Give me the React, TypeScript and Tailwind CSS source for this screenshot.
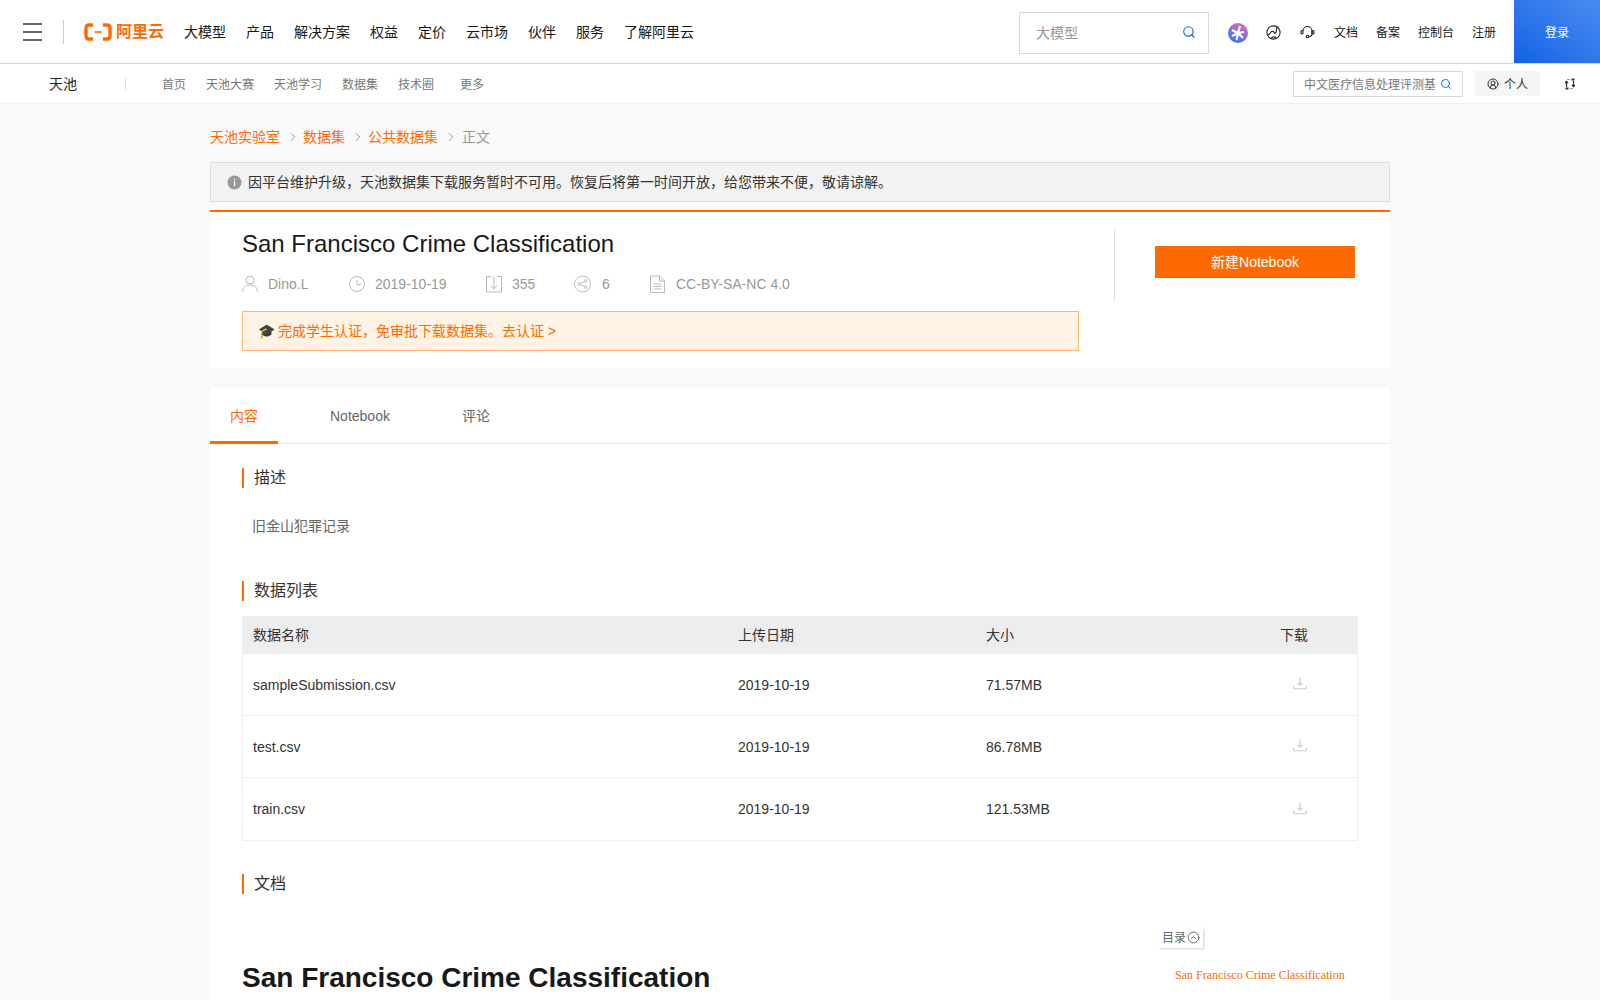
import { Search, ChevronRight, CircleChevronUp, CircleUserRound } from "lucide-react";
import type { ReactNode } from "react";

const FONT = "font-['Liberation_Sans','Noto_Sans_CJK_SC',sans-serif]";

const navItems = ["大模型", "产品", "解决方案", "权益", "定价", "云市场", "伙伴", "服务", "了解阿里云"];

const files = [
  { name: "sampleSubmission.csv", date: "2019-10-19", size: "71.57MB" },
  { name: "test.csv", date: "2019-10-19", size: "86.78MB" },
  { name: "train.csv", date: "2019-10-19", size: "121.53MB" },
];

function Logo() {
  return (
    <div className="ml-5 flex items-center gap-1 text-[#ff6a00]">
      <svg width="28" height="18" viewBox="0 0 28 18" fill="none">
        <path d="M9 2H5C3 2 2 3 2 5v8c0 2 1 3 3 3h4" stroke="#ff6a00" strokeWidth="3.4" />
        <path d="M19 2h4c2 0 3 1 3 3v8c0 2-1 3-3 3h-4" stroke="#ff6a00" strokeWidth="3.4" />
        <path d="M10.5 9h7" stroke="#ff6a00" strokeWidth="1.6" />
      </svg>
      <span className="text-base font-bold leading-none">阿里云</span>
    </div>
  );
}

function SectionTitle({ children }: { children: string }) {
  return <h3 className="border-l-2 border-[#ff6a00] pl-2.5 text-base leading-5 text-[#333]">{children}</h3>;
}

function Meta({ icon, text, className }: { icon: ReactNode; text: string; className: string }) {
  return (
    <div className={`flex items-center ${className}`}>
      <svg width="18" height="18" viewBox="0 0 18 18" fill="none" stroke="#bbb" strokeWidth="1" className="shrink-0">
        {icon}
      </svg>
      <span>{text}</span>
    </div>
  );
}

export default function App() {
  return (
    <div className={`${FONT} h-[1000px] overflow-hidden bg-[#f9f9f9] text-[#333]`}>
      {/* 顶部导航 */}
      <header className="flex h-16 items-stretch border-b border-[#d9d9d9] bg-white">
        <div className="flex items-center pl-[23px]">
          <div className="flex w-[19px] flex-col gap-[6px]">
            <span className="h-0.5 bg-[#666]" />
            <span className="h-0.5 bg-[#666]" />
            <span className="h-0.5 bg-[#666]" />
          </div>
          <span className="ml-[21px] h-6 w-px bg-[#ccc]" />
          <Logo />
        </div>
        <nav className="ml-5 flex items-center gap-5 pt-px text-sm text-[#181818]">
          {navItems.map((n) => (
            <span key={n}>{n}</span>
          ))}
        </nav>
        <div className="ml-auto flex items-center">
          <div className="mt-[3px] flex h-[42px] w-[190px] items-center justify-between border border-[#d9d9d9] pl-4 pr-3 text-sm text-[#999]">
            <span>大模型</span>
            <Search size={14} className="mb-[3px] text-[#1a66e8]" />
          </div>
          <svg width="20" height="20" viewBox="0 0 20 20" className="ml-[19px] mt-0.5">
            <defs>
              <linearGradient id="g" x1="0.8" y1="0" x2="0.3" y2="1">
                <stop offset="0" stopColor="#e56fa8" />
                <stop offset="0.5" stopColor="#8a6fe0" />
                <stop offset="1" stopColor="#2f7bf0" />
              </linearGradient>
            </defs>
            <circle cx="10" cy="10" r="10" fill="url(#g)" />
            <path d="M12 3l-2 7-1.5 7M4 7l6 3 6-1M10 10l5 5M10 10l-6 3" stroke="#fff" strokeWidth="2.2" fill="none" />
          </svg>
          <svg width="15" height="15" viewBox="0 0 15 15" fill="none" stroke="#222" strokeWidth="1.1" className="ml-[18px] mt-0.5">
            <circle cx="7.5" cy="7.5" r="6.6" />
            <path d="M1.5 10c2 0 2.5-1.5 3.5-3s3-.5 3.5 1 2-1 2-3 1-3 2-3" />
            <path d="M5 13.5c1-1.5 3-2 5-1" />
          </svg>
          <svg width="15" height="15" viewBox="0 0 15 15" fill="none" stroke="#222" strokeWidth="1.1" className="ml-[19px] mt-0.5">
            <path d="M3 6a4.5 4.5 0 0 1 9 0v3c0 1.5-1.5 2.5-3.2 2.5" />
            <rect x="1" y="5.5" width="2" height="3.5" rx="1" />
            <rect x="12" y="5.5" width="2" height="3.5" rx="1" />
            <circle cx="7.5" cy="11.5" r="1.3" />
          </svg>
          <div className="ml-[19px] mt-0.5 flex items-center gap-[18px] text-xs text-[#181818]">
            <span>文档</span>
            <span>备案</span>
            <span>控制台</span>
            <span className="mr-[18px]">注册</span>
          </div>
          <div className="flex h-full w-[86px] items-center justify-center bg-gradient-to-tr from-[#0f62e6] to-[#4a8bf0] pt-0.5 text-xs text-white">
            登录
          </div>
        </div>
      </header>

      {/* 天池导航 */}
      <div className="flex h-10 items-center border-b border-[#eee] bg-white pl-[49px]">
        <span className="w-[76px] pt-px text-sm text-[#222]">天池</span>
        <span className="h-3 w-px bg-[#ddd]" />
        <nav className="ml-9 flex items-center pt-0.5 text-xs text-[#777]">
          <span className="mr-5">首页</span>
          <span className="mr-5">天池大赛</span>
          <span className="mr-5">天池学习</span>
          <span className="mr-5">数据集</span>
          <span className="mr-[26px]">技术圈</span>
          <span>更多</span>
        </nav>
        <div className="ml-auto flex items-center">
          <div className="flex h-[26px] w-[170px] items-center justify-between border border-[#d9d9d9] pl-2.5 pr-2.5 pt-0.5 text-xs text-[#777]">
            <span className="w-[131px] overflow-hidden whitespace-nowrap">中文医疗信息处理评测基</span>
            <Search size={12} className="mb-0.5 shrink-0 text-[#1a66e8]" />
          </div>
          <div className="ml-3 flex h-[25px] w-[65px] items-center justify-center gap-[5px] bg-[#f5f5f5] pt-0.5 text-xs text-[#333]">
            <CircleUserRound size={12} className="mb-0.5" />
            <span>个人</span>
          </div>
          <svg width="10" height="12" viewBox="0 0 10 12" fill="none" stroke="#333" strokeWidth="1.3" className="ml-[25px] mr-[25px]">
            <path d="M1.5 9V3.500M0 5l1.500-1.500L3 5M8.500 3v5.500M7 7l1.500 1.500L10 7" />
            <path d="M2 1.500h3M5 10.500h3" stroke="#999" strokeWidth="1" />
            <rect x="6.500" y="0.500" width="3" height="2" fill="#333" stroke="none" />
            <rect x="0.500" y="9.500" width="3" height="2" fill="#333" stroke="none" />
          </svg>
        </div>
      </div>

      <main className="mx-auto w-[1180px]">
        {/* 面包屑 */}
        <div className="flex h-[58px] items-center pt-2 text-sm text-[#ff6a00]">
          <span>天池实验室</span>
          <ChevronRight size={14} strokeWidth={1.4} className="ml-1.5 mr-[3px] text-[#888]" />
          <span>数据集</span>
          <ChevronRight size={14} strokeWidth={1.4} className="ml-1.5 mr-[3px] text-[#888]" />
          <span>公共数据集</span>
          <ChevronRight size={14} strokeWidth={1.4} className="ml-1.5 mr-1 text-[#888]" />
          <span className="text-[#999]">正文</span>
        </div>

        <div className="flex h-10 items-center gap-1.5 border border-[#ddd] bg-[#f2f2f2] pl-4 text-sm text-[#333]">
          <svg width="15" height="15" viewBox="0 0 15 15" className="shrink-0">
            <circle cx="7.5" cy="7.5" r="7" fill="#999" />
            <path d="M7.5 6.500v4.500M7.500 3.800v1.400" stroke="#fff" strokeWidth="1.3" />
          </svg>
          <span>因平台维护升级，天池数据集下载服务暂时不可用。恢复后将第一时间开放，给您带来不便，敬请谅解。</span>
        </div>

        {/* 标题卡片 */}
        <section className="mt-2 flex h-[158px] border-t-2 border-[#ff6a00] bg-white pl-8">
          <div className="w-[837px] pt-[17px]">
            <h1 className="text-2xl leading-[30px] text-[#181818]">San Francisco Crime Classification</h1>
            <div className="mt-[13px] flex h-6 items-center text-sm text-[#999]">
              <Meta
                className="w-[107px] gap-2"
                text="Dino.L"
                icon={
                  <>
                    <circle cx="8" cy="5" r="4" />
                    <path d="M.5 17c0-4.500 3-7 7.500-7s7.500 2.500 7.500 7" />
                  </>
                }
              />
              <Meta
                className="w-[137px] gap-2"
                text="2019-10-19"
                icon={
                  <>
                    <circle cx="8" cy="9" r="7.5" />
                    <path d="M8 5v4.500h4" />
                  </>
                }
              />
              <Meta
                className="w-[88px] gap-2"
                text="355"
                icon={
                  <>
                    <path d="M5 1.500H.5v15.500h15V1.500H11" />
                    <path d="M8 1.500v12M5 10.500l3 3.500 3-3.500" />
                  </>
                }
              />
              <Meta
                className="w-[76px] gap-2.5"
                text="6"
                icon={
                  <>
                    <circle cx="8.5" cy="9" r="8" />
                    <circle cx="5.3" cy="9" r="1.3" />
                    <circle cx="11.5" cy="6" r="1.3" />
                    <circle cx="11.5" cy="12" r="1.3" />
                    <path d="M6.500 8.500l3.900-2M6.500 9.500l3.900 2" />
                  </>
                }
              />
              <Meta
                className="gap-2"
                text="CC-BY-SA-NC 4.0"
                icon={
                  <>
                    <path d="M.5 1h9l5 5v11.500H.5z" />
                    <path d="M9.500 1v5h5M3.500 9h8M3.500 11.500h8M3.500 14h8" />
                  </>
                }
              />
            </div>
            <div className="mt-[15px] flex h-10 items-center gap-[3px] border border-[#ffb66f] bg-[#fff3e6] pl-[15px] text-sm text-[#ff6a00]">
              <span className="text-[#333]">🎓</span>
              <span>完成学生认证，免审批下载数据集。去认证 &gt;</span>
            </div>
          </div>
          <div className="ml-[35px] mt-[17px] h-[72px] w-px bg-[#ddd]" />
          <div className="ml-10 mt-[34px] flex h-8 w-[200px] items-center justify-center bg-[#ff6a00] text-sm text-white">
            新建Notebook
          </div>
        </section>

        {/* 内容 */}
        <section className="mt-5 bg-white pb-20">
          <div className="flex h-14 items-stretch border-b border-[#e8e8e8] text-sm text-[#666]">
            <div className="-mb-px flex w-[68px] items-center justify-center border-b-[3px] border-[#ff6a00] pt-[3px] text-[#ff6a00]">
              内容
            </div>
            <div className="ml-[52px] flex items-center pt-px">Notebook</div>
            <div className="ml-[72px] flex items-center pt-px">评论</div>
          </div>

          <div className="px-8 pt-6">
            <SectionTitle>描述</SectionTitle>
            <p className="mt-[26px] pl-2.5 text-sm leading-6 text-[#666]">旧金山犯罪记录</p>

            <div className="mt-[43px]">
              <SectionTitle>数据列表</SectionTitle>
            </div>

            <div className="mt-[15px] w-[1116px] border border-t-0 border-[#eee] text-sm text-[#333]">
              <div className="-mx-px grid h-[38px] grid-cols-[485px_248px_1fr_110px] items-center bg-[#ededed] pl-[11px]">
                <span>数据名称</span>
                <span>上传日期</span>
                <span>大小</span>
                <span className="pl-8">下载</span>
              </div>
              {files.map((f) => (
                <div
                  key={f.name}
                  className="grid h-[62px] grid-cols-[485px_248px_1fr_110px] items-center border-b border-[#eee] pl-2.5 last:border-b-0"
                >
                  <span>{f.name}</span>
                  <span>{f.date}</span>
                  <span>{f.size}</span>
                  <span className="pb-[3px] pl-[45px]">
                    <svg width="16" height="16" viewBox="0 0 14 14" fill="none" stroke="#ccc" strokeWidth="1">
                      <path d="M7 2v7M5 7l2 2 2-2M1.500 9.500v2.500h11V9.500" />
                    </svg>
                  </span>
                </div>
              ))}
            </div>

            <div className="mt-[33px]">
              <SectionTitle>文档</SectionTitle>
            </div>

            <div className="flex justify-between pt-[34px]">
              <h1 className="mt-8 text-[28px] font-bold leading-9 text-[#181818]">San Francisco Crime Classification</h1>
              <div className="w-[199px]">
                <div className="flex h-5 w-[44px] items-center gap-px bg-white pl-[3px] text-xs text-[#666] shadow-[1px_1px_2px_rgba(0,0,0,0.2)]">
                  <span>目录</span>
                  <CircleChevronUp size={13} strokeWidth={1.4} className="mb-0.5 text-[#444]" />
                </div>
                <div className="mt-[19px] whitespace-nowrap pl-4 font-['Liberation_Serif',serif] text-xs text-[#ff6a00]">
                  San Francisco Crime Classification
                </div>
              </div>
            </div>
          </div>
        </section>
      </main>
    </div>
  );
}
